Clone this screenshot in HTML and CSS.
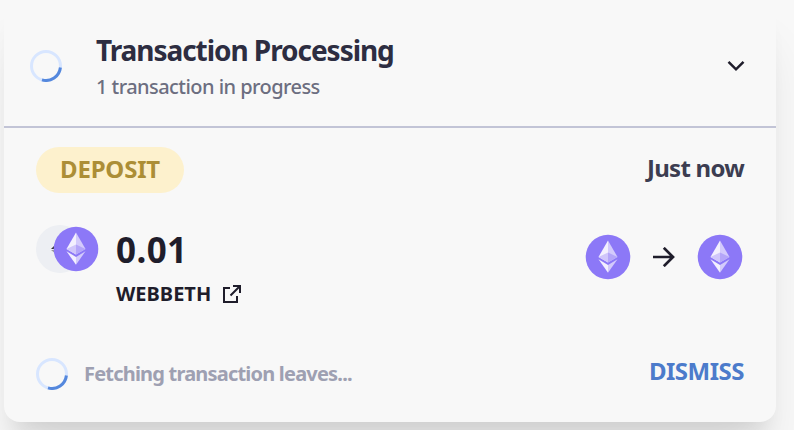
FILE: index.html
```html
<!DOCTYPE html>
<html lang="en">
<head>
<meta charset="utf-8">
<title>Transaction Processing</title>
<link rel="stylesheet" href="styles.css">
</head>
<body>
<svg width="0" height="0" class="defs" aria-hidden="true">
  <symbol id="eth" viewBox="0 0 46 46">
    <circle cx="23" cy="23" r="22.3" fill="#8c78f7"/>
    <path d="M23 6.5 13.5 23 23 28.5z" fill="#f3f0fe"/>
    <path d="M23 6.5 32.5 23 23 28.5z" fill="#d3cafc"/>
    <path d="M23 18.5 13.5 23 23 28.5z" fill="#d0c6fb"/>
    <path d="M23 18.5 32.5 23 23 28.5z" fill="#b4a5f9"/>
    <path d="M13.5 25.3 23 31V38.7z" fill="#f3f0fe"/>
    <path d="M32.5 25.3 23 31V38.7z" fill="#d3cafc"/>
  </symbol>
  <symbol id="spinner" viewBox="0 0 32 32">
    <circle cx="16" cy="16" r="14.5" fill="none" stroke="#d8e6ff" stroke-width="3"/>
    <path d="M30.4 17.5A14.5 14.5 0 0 1 12 29.9" fill="none" stroke="#5588dd" stroke-width="3"/>
  </symbol>
</svg>
<main class="card">
  <header class="header">
    <svg class="spinner"><use href="#spinner"/></svg>
    <div class="heading">
      <h1 class="title">Transaction Processing</h1>
      <p class="subtitle">1 transaction in progress</p>
    </div>
    <svg class="chevron" viewBox="0 0 18 12"><path d="m1.5 1.8 7.5 7.5 7.5-7.5" fill="none" stroke="#1f1d2b" stroke-width="2.5"/></svg>
  </header>
  <section class="body">
    <div class="row status">
      <span class="badge"><span class="badge-text">DEPOSIT</span></span>
      <span class="time">Just now</span>
    </div>
    <div class="row details">
      <div class="token">
        <div class="pair">
          <span class="pair-back"><svg class="sliver" viewBox="0 0 6 10"><path d="M0 5 5 0V5z" fill="#333"/><path d="M0 6H5V10z" fill="#999"/></svg></span>
          <svg class="coin"><use href="#eth"/></svg>
        </div>
        <div class="amount">
          <div class="value">0.01</div>
          <div class="symbol"><span class="name">WEBBETH</span>
            <svg class="external" viewBox="0 0 20 20"><path d="M8 4H2V18H15V12M11 2H18V9M18 2 8.5 11.5" fill="none" stroke="#1f1d2b" stroke-width="2"/></svg>
          </div>
        </div>
      </div>
      <div class="route">
        <svg class="coin"><use href="#eth"/></svg>
        <svg class="arrow" viewBox="0 0 22 20"><path d="M0 10H20M10.8.8l9.2 9.2-9.2 9.2" fill="none" stroke="#1f1d2b" stroke-width="2.7"/></svg>
        <svg class="coin"><use href="#eth"/></svg>
      </div>
    </div>
    <footer class="row footer">
      <div class="progress"><svg class="spinner"><use href="#spinner"/></svg><span class="message">Fetching transaction leaves...</span></div>
      <button class="dismiss">DISMISS</button>
    </footer>
  </section>
</main>
</body>
</html>
```
FILE: styles.css
```css
* { box-sizing: border-box; }
body { margin: 0; height: 430px; overflow: hidden; background: #f8f8f8; font-family: "Noto Sans", sans-serif; color: #1f1d2b; }
h1, p { margin: 0; }
svg { display: block; flex: none; }
.defs { display: none; }
.card { width: 772px; height: 422px; margin-left: 4px; border-radius: 0 0 16px 16px; background: #f8f8f8; box-shadow: 0 40px 50px -10px rgba(0,0,0,.1), 0 20px 20px -10px rgba(0,0,0,.08); }
.header { display: flex; height: 128px; padding: 0 30px 0 26px; border-bottom: 2px solid #c2c4d6; }
.spinner { width: 32px; height: 32px; }
.header .spinner { margin-top: 50px; }
.heading { flex: 1; padding: 32px 0 0 34px; white-space: nowrap; }
.title { font-size: 28px; line-height: 36px; font-weight: 700; letter-spacing: -1.05px; color: #2d2d41; }
.subtitle { margin-top: 5px; font-size: 20px; line-height: 28px; font-weight: 500; letter-spacing: -.55px; color: #6c6e80; }
.chevron { width: 18px; height: 12px; margin: 60px 1px 0 0; }
.body { padding: 19px 32px 0; }
.row { display: flex; justify-content: space-between; white-space: nowrap; }
.badge { display: flex; align-items: center; justify-content: center; width: 148px; height: 46px; padding-bottom: 3px; border-radius: 23px; background: #fdf1cd; color: #ac8e36; font-size: 24px; font-weight: 700; letter-spacing: -.2px; }
.time { font-size: 24px; line-height: 42px; font-weight: 700; letter-spacing: -.75px; color: #3c3d51; }
.details { padding-top: 31px; height: 157px; }
.token { display: flex; }
.pair { position: relative; width: 80px; height: 50px; }
.pair-back { display: block; width: 48px; height: 48px; margin-top: 1px; border-radius: 50%; background: #edeff3; }
.sliver { position: absolute; left: 15px; top: 20px; width: 6px; height: 10px; }
.coin { width: 46px; height: 46px; }
.pair .coin { position: absolute; left: 17px; top: 2px; }
.value { font-size: 35px; line-height: 52px; font-weight: 700; letter-spacing: .4px; }
.symbol { display: flex; align-items: center; gap: 11px; margin-top: 4px; height: 28px; font-size: 20px; font-weight: 700; letter-spacing: 0; }
.name { margin-top: -2px; }
.external { width: 20px; height: 20px; }
.route { display: flex; align-items: center; height: 46px; margin: 10px 1px 0 0; gap: 22px; }
.arrow { width: 22px; height: 20px; }
.footer { height: 48px; }
.progress { display: flex; align-items: center; gap: 16px; height: 32px; margin-top: 8px; }
.message { margin-top: -2px; font-size: 20px; font-weight: 700; letter-spacing: -.8px; color: #9ea0b2; }
.dismiss { padding: 0; border: 0; background: none; height: 34px; margin-top: 4px; font: 700 24px/34px "Noto Sans", sans-serif; letter-spacing: -.5px; color: #4c7bcb; }
```
